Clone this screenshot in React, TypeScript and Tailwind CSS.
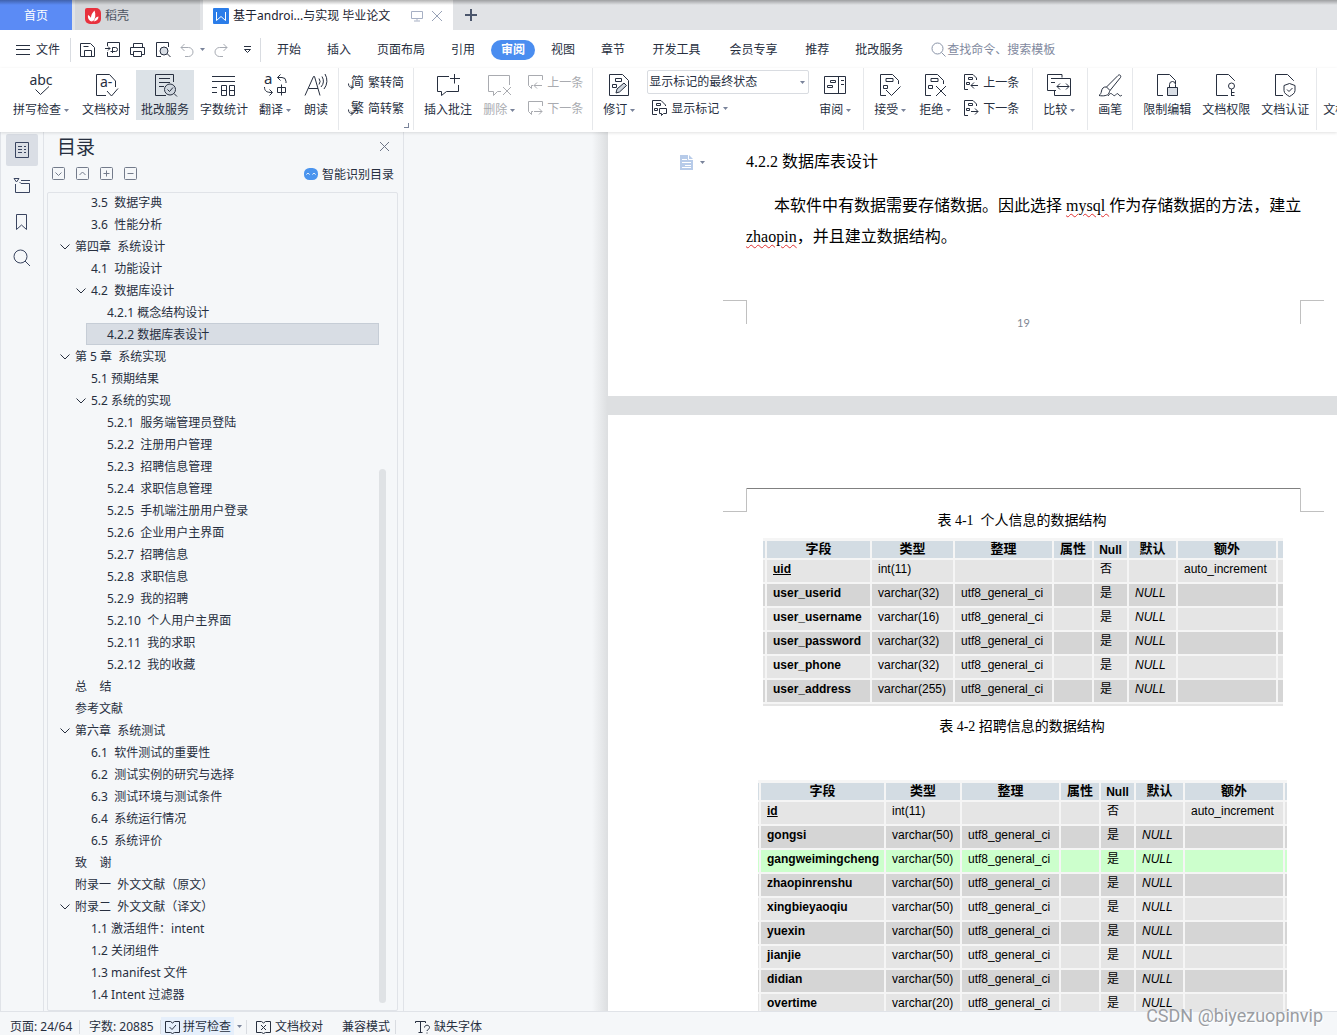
import { useState } from "react";
import type { ReactNode } from "react";

type TocItem = { level: 0 | 1 | 2; text: string; open?: boolean };
type Row = { name: string; type: string; key?: boolean; hot?: boolean };

const TOC: TocItem[] = [
  { level: 1, text: "3.5  数据字典" },
  { level: 1, text: "3.6  性能分析" },
  { level: 0, text: "第四章  系统设计", open: true },
  { level: 1, text: "4.1  功能设计" },
  { level: 1, text: "4.2  数据库设计", open: true },
  { level: 2, text: "4.2.1 概念结构设计" },
  { level: 2, text: "4.2.2 数据库表设计" },
  { level: 0, text: "第 5 章  系统实现", open: true },
  { level: 1, text: "5.1 预期结果" },
  { level: 1, text: "5.2 系统的实现", open: true },
  { level: 2, text: "5.2.1  服务端管理员登陆" },
  { level: 2, text: "5.2.2  注册用户管理" },
  { level: 2, text: "5.2.3  招聘信息管理" },
  { level: 2, text: "5.2.4  求职信息管理" },
  { level: 2, text: "5.2.5  手机端注册用户登录" },
  { level: 2, text: "5.2.6  企业用户主界面" },
  { level: 2, text: "5.2.7  招聘信息" },
  { level: 2, text: "5.2.8  求职信息" },
  { level: 2, text: "5.2.9  我的招聘" },
  { level: 2, text: "5.2.10  个人用户主界面" },
  { level: 2, text: "5.2.11  我的求职" },
  { level: 2, text: "5.2.12  我的收藏" },
  { level: 0, text: "总    结" },
  { level: 0, text: "参考文献" },
  { level: 0, text: "第六章  系统测试", open: true },
  { level: 1, text: "6.1  软件测试的重要性" },
  { level: 1, text: "6.2  测试实例的研究与选择" },
  { level: 1, text: "6.3  测试环境与测试条件" },
  { level: 1, text: "6.4  系统运行情况" },
  { level: 1, text: "6.5  系统评价" },
  { level: 0, text: "致    谢" },
  { level: 0, text: "附录一  外文文献（原文）" },
  { level: 0, text: "附录二  外文文献（译文）", open: true },
  { level: 1, text: "1.1 激活组件：intent" },
  { level: 1, text: "1.2 关闭组件" },
  { level: 1, text: "1.3 manifest 文件" },
  { level: 1, text: "1.4 Intent 过滤器" },
];

const INDENT = ["ml-[6px]", "ml-[22px]", "ml-[38px]"];

const MENU = ["开始", "插入", "页面布局", "引用", "审阅", "视图", "章节", "开发工具", "会员专享", "推荐", "批改服务"];
const WIDE_MENU = new Set(["开发工具", "会员专享"]);

const USER_ROWS: Row[] = [
  { name: "uid", type: "int(11)", key: true },
  { name: "user_userid", type: "varchar(32)" },
  { name: "user_username", type: "varchar(16)" },
  { name: "user_password", type: "varchar(32)" },
  { name: "user_phone", type: "varchar(32)" },
  { name: "user_address", type: "varchar(255)" },
];

const JOB_ROWS: Row[] = [
  { name: "id", type: "int(11)", key: true },
  { name: "gongsi", type: "varchar(50)" },
  { name: "gangweimingcheng", type: "varchar(50)", hot: true },
  { name: "zhaopinrenshu", type: "varchar(50)" },
  { name: "xingbieyaoqiu", type: "varchar(50)" },
  { name: "yuexin", type: "varchar(50)" },
  { name: "jianjie", type: "varchar(50)" },
  { name: "didian", type: "varchar(50)" },
  { name: "overtime", type: "varchar(20)" },
];

const USER_COLS = ["w-[4px]", "w-[105px]", "w-[83px]", "w-[99px]", "w-[40px]", "w-[35px]", "w-[49px]", "w-[100px]", "w-[5px]"];
const JOB_COLS = ["w-[3px]", "w-[125px]", "w-[76px]", "w-[99px]", "w-[40px]", "w-[35px]", "w-[49px]", "w-[100px]", "w-[2px]"];

function Svg({ w = 24, h = 24, className = "", children }: { w?: number; h?: number; className?: string; children: ReactNode }) {
  return (
    <svg width={w} height={h} viewBox={`0 0 ${w} ${h}`} fill="none" stroke="currentColor" className={`shrink-0 overflow-visible ${className}`} aria-hidden="true">
      {children}
    </svg>
  );
}

function Caret() {
  return (
    <svg width="5" height="3" viewBox="0 0 5 3" className="shrink-0 fill-[#79839a]" aria-hidden="true">
      <path d="M0 0h5L2.500 3z" />
    </svg>
  );
}

// ribbon glyphs, all on a 24px grid
const DOC = "M8 22.500H2.500V1.500H14.500L20.500 7.500V11";
const MARKS = "M8 5.500h7v3H8zM5.500 12.500h4v3h-4z";

const ICONS: Record<string, ReactNode> = {
  spell: (
    <>
      <text x="12" y="12" textAnchor="middle" fontSize="14" fill="currentColor" stroke="none">abc</text>
      <path d="M6.500 16.500l5 5 8.500-8" />
    </>
  ),
  proof: (
    <>
      <path d="M12 22.500H2.500V1.500H15.500L21.500 8V14" />
      <text x="6" y="14" fontSize="14" fill="currentColor" stroke="none">a-</text>
      <path d="M13 18l4.500 5L24 15.500" />
    </>
  ),
  review: (
    <>
      <path d="M13 22.500H2.500V1.500H20.500V9M6 5.500h11M6 9.500h11M6 13.500h5" />
      <circle cx="17" cy="16.500" r="5.500" fill="#cfd6de" />
      <path d="M14.500 16.500l2 2 3.500-4M21 20.500l3 3" />
    </>
  ),
  count: <path d="M0 3.500h23M0 8.500h23M0 14.500h5M0 19.500h5M9.500 12.500h5v10h-5zM17.500 12.500h5v10h-5zM9.500 17.500h5M17.500 17.500h5" />,
  translate: (
    <>
      <text x="1" y="11" fontSize="15" fill="currentColor" stroke="none">a</text>
      <path d="M17.500 1.500L14.500 4.500l3 3M14.500 4.500h4.500a4 4 0 0 1 4 4V10M14.500 14.500h8v5h-8zM18.500 11.500v11M1.500 14c0 4 2 5.500 7.500 5.500M6.500 16.500l3 3-3 3" />
    </>
  ),
  read: (
    <path d="M1 22.500L9.500 3.500h1L16 22.500M4.500 15.500h9.500M15 5.500a5 5 0 0 1 0 6M18 3.500a9 9 0 0 1-1 10.500M21 1a13 13 0 0 1-1 15" />
  ),
  addNote: <path d="M13 3.500H1.500v15h4v4l5-4h12V12M14 5.500h10M18.500 1v9.500" />,
  delNote: <path d="M14 18.500h-3.500l-4 4v-4h-5V2.500h21V12M16 14l8 8M24 14l-8 8" />,
  revise: (
    <>
      <path d="M2.500 1.500H15.500L21.500 7.500V22.500H2.500zM8.500 5.500h6v3h-6zM5.500 11.500h4v3h-4z" />
      <path d="M9 20l1-4 7-6 2.500 2.500-7 6.500z" fill="#cfd6de" />
    </>
  ),
  pane: <path d="M1.500 3.500h21v17h-21zM15.500 3.500v17M7.500 7.500h5v2h-5zM4.500 12.500h5v2h-5zM18 7.500h3M18 11.500h3" />,
  accept: <path d={`${DOC} ${MARKS} M8 17l5.500 5.500 9-9`} />,
  reject: <path d={`${DOC} ${MARKS} M13 13l10 10M23 13l-10 10`} />,
  compare: <path d="M9 17.500H.5V1.500h14.500V4.500M4 5.500h8M4 9.500h4M12 5.500h11.500v17H7.500V18M10 13.500h12M13 10.500l-3 3 3 3M19 10.500l3 3-3 3" />,
  brush: <path d="M8.500 14L20 2.500c1.500-1.500 3.500 0 2.500 2L12 17.500M8.500 14c-3-.5-4.500 1.500-5 4-.3 2-1 3.500-2.500 4.500 4 .8 9 .3 10-2.500 .4-1.200.7-2.200 1-2.500M8.500 14l3.500 3.500M10 23c2-3 3-3 4.500-1.500s2.500 1.500 3.500 0 2-1 3 .5 2 1 3 0" />,
  lock: (
    <>
      <path d={DOC} />
      <path d="M12.500 14.500h10v8h-10z" fill="#d9dee5" />
      <path d="M14.500 14v-2.500a3 3 0 0 1 6 0V14" />
    </>
  ),
  key: (
    <>
      <path d="M14 22.500H2.500V1.500H14.500L20.500 7.500V8" />
      <circle cx="17.500" cy="13" r="3" />
      <path d="M17.500 16v7M17.500 19.500h3M17.500 22.500h3" />
    </>
  ),
  shield: <path d="M10 22.500H2.500V1.500H14.500L20.500 7.500V8M16.500 10.500l5.500 2v5c0 3-3 4.500-5.500 6-2.500-1.500-5.500-3-5.500-6v-5zM14 16.500l2 2 3.500-3.500" />,
};

function Tool({ icon, label, drop, active, disabled }: { icon: string; label: string; drop?: boolean; active?: boolean; disabled?: boolean }) {
  return (
    <button
      disabled={disabled}
      className={`h-[50px] pt-[3px] pl-[5px] flex flex-col items-center shrink-0 ${drop ? "pr-[7px]" : "pr-[5px]"} ${
        active ? "bg-[#dce2e7]" : "hover:bg-[#eef0f3]"
      } ${disabled ? "text-[#a9abb0]" : "text-[#272f3f]"}`}
    >
      <Svg>{ICONS[icon]}</Svg>
      <span className="mt-[5px] flex items-center gap-[3px] leading-4 whitespace-nowrap">
        {label}
        {drop && <Caret />}
      </span>
    </button>
  );
}

function SmallTool({ icon, label, drop, disabled }: { icon: ReactNode; label: string; drop?: boolean; disabled?: boolean }) {
  return (
    <button disabled={disabled} className={`h-6 flex items-center gap-1 whitespace-nowrap ${disabled ? "text-[#a9abb0]" : "text-[#272f3f]"}`}>
      <Svg w={16} h={16}>{icon}</Svg>
      <span className="pt-0.5">{label}</span>
      {drop && <Caret />}
    </button>
  );
}

function Group({ children, className = "" }: { children: ReactNode; className?: string }) {
  return <div className={`relative flex items-start gap-px px-[5px] pt-0.5 h-[62px] border-r border-[#e6e8eb] shrink-0 ${className}`}>{children}</div>;
}

function SmallColumn({ children }: { children: ReactNode }) {
  return <div className="flex flex-col gap-0.5 px-1">{children}</div>;
}

const notePrev = <path d="M6 11.500H4.500v3l-3-3V1.500h14V6M7 11.500h8M10 8.500l-3 3 3 3" />;
const noteNext = <path d="M6 11.500H4.500v3l-3-3V1.500h14V6M7 11.500h8M12 8.500l3 3-3 3" />;
const revPrev = <path d="M5 15.500H1.500V.5H10L13.500 4V6M5.500 3.500h4v2h-4zM3.500 8.500h3v2h-3zM8 11.500h7M11 8.500l-3 3 3 3" />;
const revNext = <path d="M5 15.500H1.500V.5H10L13.500 4V6M5.500 3.500h4v2h-4zM3.500 8.500h3v2h-3zM8 11.500h7M12 8.500l3 3-3 3" />;
const showMarks = <path d="M6 14.500H1.500V.5H10L14.500 5V6M5.500 3.500h4v2h-4zM3.500 8.500h3v2h-3zM8.500 8.500h7v5h-3l-2 2v-2h-2z" />;

function hanIcon(ch: string) {
  return (
    <>
      <text x="3" y="12" fontSize="13" fill="currentColor" stroke="none">{ch}</text>
      <path d="M.5 9.500c0 3 1 4 4 4M3 11.500l2 2-2 2" />
    </>
  );
}

function TitleTabs() {
  return (
    <div className="relative h-[30px] flex bg-[#e1e3e6] shrink-0">
      <button className="w-[72px] pt-0.5 bg-[#5b8bf5] text-white">首页</button>
      <button className="ml-[3px] w-[125px] pt-0.5 pl-[10px] flex items-center gap-1 bg-[#d5d7da] text-[#4c5361]">
        <Svg w={16} h={16}>
          <path d="M2 0h9a5 5 0 0 1 5 5v6a5 5 0 0 1-5 5H5a5 5 0 0 1-5-5V2a2 2 0 0 1 2-2z" fill="#e8313d" stroke="none" />
          <path d="M8 13.500C4.500 11 6 6 9.500 2.500c1.500 4 1 8-1.500 11zM7 13.500C4 13 2.500 10 3 7c2 1 4 3.500 4 6.500zM9 13.500c.5-3 2-4.500 4.500-5 0 2.500-1.500 4.500-4.500 5z" fill="#fff" stroke="none" />
        </Svg>
        稻壳
      </button>
      <div className="ml-[3px] w-[250px] pt-0.5 px-[10px] flex items-center bg-white text-[#1b2230]">
        <Svg w={16} h={16}>
          <rect width="16" height="16" rx="1" fill="#2b7de9" stroke="none" />
          <path d="M3.500 4v8.500L8 8.500l4.500 4V4" stroke="#fff" />
        </Svg>
        <button className="ml-1 whitespace-nowrap">基于androi...与实现 毕业论文</button>
        <span className="flex-1" />
        <Svg w={12} h={12} className="text-[#a7b0c4]">
          <path d="M.5 1.500h11v7H.5zM6 8.500v2M3 11h6" />
        </Svg>
        <button aria-label="关闭标签" className="ml-2 text-[#97a1b6]">
          <Svg w={12} h={12}>
            <path d="M1 1l10 10M11 1L1 11" />
          </Svg>
        </button>
      </div>
      <button aria-label="新建标签" className="ml-3 text-[#4b566c]">
        <Svg w={12} h={12}>
          <path d="M6 0v12M0 6h12" strokeWidth="2" />
        </Svg>
      </button>
      <div className="absolute inset-x-0 top-0 h-[5px] bg-linear-to-b from-black/30 to-transparent" />
    </div>
  );
}

function MenuBar({ tab, onTab }: { tab: string; onTab: (t: string) => void }) {
  return (
    <div className="h-[38px] pt-px flex items-center bg-white shrink-0">
      <button className="pl-4 pr-[10px] flex items-center gap-[6px] whitespace-nowrap">
        <Svg w={14} h={12}>
          <path d="M0 1.500h14M0 5.500h14M0 10.500h14" />
        </Svg>
        文件
      </button>
      <span className="w-px h-6 bg-[#d9dce1]" />
      <div className="flex items-center gap-[9px] pl-[9px]">
        <button aria-label="保存">
          <Svg w={16} h={16}>
            <path d="M.5 14.500V1.500h10l4 4v9zM4.500 14.500V8.500h7v6M3.500 4.500h5" />
          </Svg>
        </button>
        <button aria-label="输出为PDF">
          <Svg w={16} h={16}>
            <path d="M2.500 4V.5h12v14h-12V10M0 6.500h5M3 4.500l2 2-2 2M7.500 11V5.500h3a2 2 0 0 1 0 4h-5" />
          </Svg>
        </button>
        <button aria-label="打印">
          <Svg w={16} h={16}>
            <path d="M3.500 5V1.500h9V5M3.500 12.500H.5v-7h14v7h-3M3.500 9.500h8v5h-8z" />
          </Svg>
        </button>
        <button aria-label="打印预览">
          <Svg w={16} h={16}>
            <path d="M6 14.500H1.500V.5h12V5M12.500 12l3 3" />
            <circle cx="9" cy="9" r="4" fill="#d9dee5" />
          </Svg>
        </button>
        <button aria-label="撤销" className="flex items-center gap-1.5 text-[#a7abb3]">
          <Svg w={14} h={16}>
            <path d="M4.500 2L1 5.500l3.500 3.500M1 5.500h7.500a4.500 4.500 0 0 1 0 9H5" />
          </Svg>
          <Caret />
        </button>
        <button aria-label="重做" className="text-[#a7abb3]">
          <Svg w={14} h={16}>
            <path d="M9.500 2L13 5.500 9.500 9M13 5.500H5.500a4.500 4.500 0 0 0 0 9H9" />
          </Svg>
        </button>
        <button aria-label="自定义快速访问工具栏" className="ml-1.5">
          <Svg w={9} h={8}>
            <path d="M1 .5h7M1.500 3.500h6l-3 3z" />
          </Svg>
        </button>
      </div>
      <span className="ml-2 mr-[3px] w-px h-6 bg-[#d9dce1]" />
      <nav className="flex items-center">
        {MENU.map((m) =>
          m === tab ? (
            <button key={m} className="mx-[3px] px-[10px] h-5 rounded-full bg-[#4a8df0] text-white font-bold whitespace-nowrap">
              {m}
            </button>
          ) : (
            <button key={m} onClick={() => onTab(m)} className={`h-5 whitespace-nowrap ${WIDE_MENU.has(m) ? "w-[77px]" : "px-[13px]"}`}>
              {m}
            </button>
          )
        )}
      </nav>
      <label className="ml-[15px] flex items-center gap-px text-[#8a94a8]">
        <Svg w={15} h={15}>
          <circle cx="6.500" cy="6.500" r="5.500" />
          <path d="M10.500 10.500l4 4" />
        </Svg>
        <input aria-label="查找命令" placeholder="查找命令、搜索模板" className="w-32 outline-none placeholder:text-[#7f899e]" />
      </label>
    </div>
  );
}

function Ribbon() {
  return (
    <div className="relative z-10 h-16 flex bg-white overflow-hidden shrink-0 shadow-[0_1px_3px_rgba(0,0,0,0.12)]">
      <Group className="pl-2">
        <Tool icon="spell" label="拼写检查" drop />
        <Tool icon="proof" label="文档校对" />
        <Tool icon="review" label="批改服务" active />
        <Tool icon="count" label="字数统计" />
        <Tool icon="translate" label="翻译" drop />
        <Tool icon="read" label="朗读" />
      </Group>
      <Group>
        <SmallColumn>
          <SmallTool icon={hanIcon("简")} label="繁转简" />
          <SmallTool icon={hanIcon("繁")} label="简转繁" />
        </SmallColumn>
        <span className="absolute right-1 bottom-0.5 size-[5px] border-r border-b border-[#79839a]" />
      </Group>
      <Group>
        <Tool icon="addNote" label="插入批注" />
        <Tool icon="delNote" label="删除" drop disabled />
        <SmallColumn>
          <SmallTool icon={notePrev} label="上一条" disabled />
          <SmallTool icon={noteNext} label="下一条" disabled />
        </SmallColumn>
      </Group>
      <Group>
        <Tool icon="revise" label="修订" drop />
        <SmallColumn>
          <div className="relative w-[162px]">
            <select aria-label="修订显示状态" className="w-full h-6 pl-px appearance-none border border-[#d9dce1] rounded-xs bg-white">
              <option>显示标记的最终状态</option>
              <option>最终状态</option>
              <option>原始状态</option>
            </select>
            <span className="absolute right-1 top-[11px] pointer-events-none flex">
              <Caret />
            </span>
          </div>
          <div className="pl-1">
            <SmallTool icon={showMarks} label="显示标记" drop />
          </div>
        </SmallColumn>
        <Tool icon="pane" label="审阅" drop />
      </Group>
      <Group className="pr-[9px]">
        <Tool icon="accept" label="接受" drop />
        <Tool icon="reject" label="拒绝" drop />
        <SmallColumn>
          <SmallTool icon={revPrev} label="上一条" />
          <SmallTool icon={revNext} label="下一条" />
        </SmallColumn>
      </Group>
      <Group>
        <Tool icon="compare" label="比较" drop />
      </Group>
      <Group>
        <Tool icon="brush" label="画笔" />
      </Group>
      <Group className="pr-[2px]">
        <Tool icon="lock" label="限制编辑" />
        <Tool icon="key" label="文档权限" />
        <Tool icon="shield" label="文档认证" />
      </Group>
      <div className="pt-[34px] pl-[6px] leading-4 whitespace-nowrap">文档定稿</div>
    </div>
  );
}

function Rail() {
  const glyphs: [string, ReactNode][] = [
    ["目录", <path d="M2.500 1.500h13v15h-13zM5 5.500h4M11 5.500h2M5 8.500h4M11 8.500h2M5 11.500h4M11 11.500h2" />],
    ["章节", <path d="M1 1.500h5l-2.500 3.500zM8 3.500h9M2.500 7v8.500h14v-9H8L6.500 5" />],
    ["书签", <path d="M3.500 1.500h10v15l-5-4.500-5 4.500z" />],
    ["查找", <path d="M7.500 1a6.500 6.500 0 1 0 0 13 6.500 6.500 0 0 0 0-13zM12 12l5 5" />],
  ];
  return (
    <div className="w-[44px] flex flex-col items-center gap-1 pt-0.5 border-x border-[#e0e3e8] shrink-0">
      {glyphs.map(([name, glyph], i) => (
        <button key={name} aria-label={name} className={`size-8 flex items-center justify-center rounded-xs text-[#3a4560] ${i === 0 ? "bg-[#dadee5]" : ""}`}>
          <Svg w={18} h={18}>{glyph}</Svg>
        </button>
      ))}
    </div>
  );
}

function Outline() {
  const [selected, setSelected] = useState(6);
  const levels: [string, string][] = [
    ["展开", "M3.500 5.500l3 3 3-3"],
    ["收起", "M3.500 8l3-3 3 3"],
    ["提升", "M3.500 6.500h6M6.500 3.500v6"],
    ["降低", "M3.500 6.500h6"],
  ];
  return (
    <aside className="w-[360px] flex flex-col border-r border-[#e0e3e8] shrink-0">
      <div className="h-[29px] px-[13px] flex items-center justify-between">
        <h2 className="text-[19px] leading-6">目录</h2>
        <button aria-label="关闭" className="text-[#6d7587]">
          <Svg w={11} h={11}>
            <path d="M1 1l9 9M10 1l-9 9" />
          </Svg>
        </button>
      </div>
      <div className="h-6 pl-2 pr-[9px] flex items-center gap-[11px]">
        {levels.map(([name, d]) => (
          <button key={name} aria-label={name} className="text-[#737b8b]">
            <Svg w={13} h={13}>
              <rect x=".5" y=".5" width="12" height="12" rx="1" />
              <path d={d} />
            </Svg>
          </button>
        ))}
        <button className="ml-auto pt-[3px] flex items-center gap-1 whitespace-nowrap">
          <Svg w={14} h={14}>
            <rect width="14" height="12" rx="5.500" fill="#4a94ee" stroke="none" />
            <path d="M2.500 6.500c.8-1.500 2.200-1.500 3 0M8.500 6.500c.8-1.500 2.200-1.500 3 0" stroke="#fff" />
          </Svg>
          智能识别目录
        </button>
      </div>
      <div className="flex-1 min-h-0 mt-[7px] ml-[3px] mr-[5px] flex border border-[#e0e3e8] rounded-xs overflow-hidden">
        <ul className="flex-1 -mt-0.5">
          {TOC.map((item, i) => (
            <li key={item.text} className="flex">
              <button
                onClick={() => setSelected(i)}
                className={`flex-1 h-[22px] pt-0.5 flex items-center border whitespace-pre ${INDENT[item.level]} ${
                  i === selected ? "bg-[#d8dde4] border-[#c6cdd6]" : "border-transparent"
                }`}
              >
                <span className="w-5 flex justify-center">
                  {item.open && (
                    <Svg w={10} h={6}>
                      <path d="M.5 .5L5 5 9.500 .5" />
                    </Svg>
                  )}
                </span>
                {item.text}
              </button>
            </li>
          ))}
        </ul>
        <div className="w-[7px] mt-[276px] mb-[7px] mr-[11px] rounded-full bg-[#dfe2e5]" />
      </div>
    </aside>
  );
}

function FieldTable({ rows, cols, label }: { rows: Row[]; cols: string[]; label: string }) {
  const heads = ["字段", "类型", "整理", "属性", "Null", "默认", "额外"];
  const cell = "border-r-2 border-b-2 border-[#f5f5f5]";
  return (
    <table aria-label={label} className="w-full table-fixed border-separate border-spacing-0 font-['Liberation_Sans','Noto_Sans_CJK_SC',sans-serif] text-black">
      <colgroup>
        {cols.map((c, i) => (
          <col key={i} className={c} />
        ))}
      </colgroup>
      <thead>
        <tr className="h-[19px] bg-[#d3dce3]">
          <td className={`${cell} p-0`} />
          {heads.map((h) => (
            <th key={h} className={`${cell} p-0 ${h === "Null" ? "leading-4" : "pb-0.5 text-[13px] leading-[15px]"}`}>
              {h}
            </th>
          ))}
          <td className="p-0 border-b-2 border-[#f5f5f5]" />
        </tr>
      </thead>
      <tbody>
        {rows.map((r, i) => {
          const td = `${cell} pt-0 pl-[6px] pr-0 pb-1 leading-4 whitespace-nowrap`;
          return (
            <tr key={r.name} className={`h-6 ${r.hot ? "bg-[#ccffcc]" : i % 2 ? "bg-[#d5d5d5]" : "bg-[#e5e5e5]"}`}>
              <td className={`${cell} p-0`} />
              <th scope="row" className={`${td} text-left ${r.key ? "underline" : ""}`}>{r.name}</th>
              <td className={td}>{r.type}</td>
              <td className={td}>{r.key ? "" : "utf8_general_ci"}</td>
              <td className={td} />
              <td className={td}>{r.key ? "否" : "是"}</td>
              <td className={`${td} italic`}>{r.key ? "" : "NULL"}</td>
              <td className={td}>{r.key ? "auto_increment" : ""}</td>
              <td className="p-0 border-b-2 border-[#f5f5f5]" />
            </tr>
          );
        })}
      </tbody>
    </table>
  );
}

function Document() {
  const typo = "underline decoration-wavy decoration-1 decoration-[#e03030] underline-offset-2";
  return (
    <main className="flex-1 min-w-0 flex overflow-hidden bg-[#dddfe1] font-['Liberation_Serif','Noto_Sans_CJK_SC',serif] text-black">
      <div className="w-[188px] shrink-0 bg-[#f5f7f9]" />
      <div className="w-4 shrink-0 bg-linear-to-r from-[#f5f7f9] to-[#dcdee0]" />
      <div className="flex-1 min-w-0 flex flex-col gap-[19px]">
        <section className="bg-white pt-[18px] pb-[65px] text-base whitespace-nowrap">
          <div className="flex items-center h-6">
            <button aria-label="段落选项" className="w-[138px] pl-[72px] flex items-center gap-[7px] shrink-0">
              <Svg w={13} h={15}>
                <path d="M0 0h9l4 4v11H0z" fill="#b7cbe9" stroke="none" />
                <path d="M2 4.500h5M2 7.500h9M5 10.500h6M2 12.500h9M8.500 0v4.500H13" stroke="#fff" />
              </Svg>
              <Caret />
            </button>
            <h3>4.2.2 数据库表设计</h3>
          </div>
          <p className="mt-4 pl-[138px] indent-7 leading-[31px]">
            本软件中有数据需要存储数据。因此选择 <span className={typo}>mysql </span>作为存储数据的方法，建立
            <br />
            <span className={typo}>zhaopin</span>，并且建立数据结构。
          </p>
          <div className="mt-12 ml-[115px] flex items-start">
            <span className="size-6 border-t border-r border-[#c0c0c0]" />
            <span className="w-[553px] pt-[15px] text-center text-[11px] leading-4 font-['Lato',sans-serif] text-[#7f8794]">19</span>
            <span className="size-6 border-t border-l border-[#c0c0c0]" />
          </div>
        </section>
        <section className="flex-1 bg-white pt-[73px] text-sm leading-5">
          <div className="ml-[115px] flex items-start">
            <span className="size-6 border-b border-r border-[#c0c0c0]" />
            <span className="w-[553px] border-t border-[#808080]" />
            <span className="size-6 border-b border-l border-[#c0c0c0]" />
          </div>
          <p className="-mt-px ml-[137px] w-[554px] text-center whitespace-pre">表 4-1  个人信息的数据结构</p>
          <div className="mt-[7px] ml-[155px] w-[520px] h-[168px] pt-[3px] bg-[#f5f5f5] overflow-hidden text-xs">
            <FieldTable rows={USER_ROWS} cols={USER_COLS} label="个人信息的数据结构" />
            <div className="h-0.5 bg-[#e5e5e5]" />
          </div>
          <p className="mt-[11px] ml-[137px] w-[554px] text-center">表 4-2 招聘信息的数据结构</p>
          <div className="mt-[43px] ml-[150px] w-[529px] pt-[3px] bg-[#f5f5f5] text-xs">
            <FieldTable rows={JOB_ROWS} cols={JOB_COLS} label="招聘信息的数据结构" />
          </div>
        </section>
      </div>
    </main>
  );
}

function StatusBar() {
  const sep = <span className="w-px h-[14px] bg-[#d9dce1]" />;
  return (
    <footer className="relative z-10 h-6 pt-1.5 flex items-center border-t border-[#e0e3e8] bg-[#f5f7f9] whitespace-nowrap shrink-0">
      <span className="w-[79px] pl-[10px]">页面: 24/64</span>
      {sep}
      <span className="w-20 pl-[9px]">字数: 20885</span>
      {sep}
      <button className="h-5 pl-1 pr-[3px] flex items-center gap-[3px] bg-[#e6effb]">
        <Svg w={15} h={14}>
          <path d="M.5 1.500h5l2 1.500 2-1.500h5v11h-5l-2 1-2-1h-5zM4.500 7l2.500 2.500L11 5" />
        </Svg>
        拼写检查
      </button>
      <span className="pl-[3px] pr-1"><Caret /></span>
      {sep}
      <button className="pl-[9px] flex items-center gap-1">
        <Svg w={15} h={14}>
          <path d="M.5 1.500h5l2 1.500 2-1.500h5v11h-5l-2 1-2-1h-5zM5 5l5 5M10 5l-5 5" />
        </Svg>
        文档校对
      </button>
      <span className="pl-[19px] pr-[5px]">兼容模式</span>
      {sep}
      <button className="pl-[19px] flex items-center gap-1">
        <Svg w={15} h={14}>
          <path d="M.5 3V1.500h10V3M5.500 1.500v11M3.500 12.500h4M9.500 7.500c0-3 5-3 5 0 0 2-2.500 2-2.500 3.500M12 12.500v1" />
        </Svg>
        缺失字体
      </button>
    </footer>
  );
}

export default function App() {
  const [tab, setTab] = useState("审阅");
  return (
    <div className="relative h-screen flex flex-col overflow-hidden bg-[#f5f7f9] font-['Noto_Sans','Noto_Sans_CJK_SC',sans-serif] text-xs text-[#272f3f]">
      <TitleTabs />
      <MenuBar tab={tab} onTab={setTab} />
      <Ribbon />
      <div className="flex-1 min-h-0 flex">
        <Rail />
        <Outline />
        <Document />
      </div>
      <StatusBar />
      <div className="absolute right-[14px] bottom-[7px] z-20 font-['Roboto',sans-serif] text-lg leading-6 text-[#9a9da2] pointer-events-none [text-shadow:1px_1px_1px_#fff]">
        CSDN @biyezuopinvip
      </div>
    </div>
  );
}
